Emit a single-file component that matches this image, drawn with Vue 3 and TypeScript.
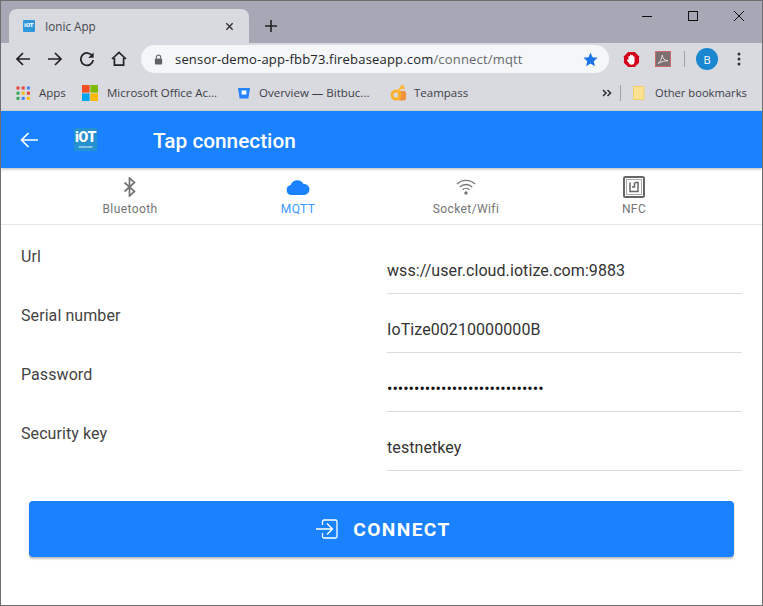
<script setup lang="ts">
const bookmarks = ['Apps', 'Microsoft Office Ac...', 'Overview — Bitbuc...', 'Teampass']
const fields = [
  { label: 'Url', value: 'wss://user.cloud.iotize.com:9883', dots: false },
  { label: 'Serial number', value: 'IoTize00210000000B', dots: false },
  { label: 'Password', value: '•••••••••••••••••••••••••••••', dots: true },
  { label: 'Security key', value: 'testnetkey', dots: false },
]
</script>

<template>
  <div class="window">
    <div class="titlebar">
      <div class="tab">
        <svg class="favicon" viewBox="0 0 12 12"><rect width="12" height="12" rx="1" fill="#2f97dc"/><text x="6" y="7.4" font-size="6" font-weight="900" text-anchor="middle" fill="#fff" font-family="Roboto">iOT</text></svg>
        <span class="tab-title">Ionic App</span>
        <svg class="tab-close" viewBox="0 0 10 10"><path d="M1.5 1.5l7 7M8.5 1.5l-7 7" stroke="#333" stroke-width="1.6"/></svg>
      </div>
      <svg class="plus" viewBox="0 0 12 12"><path d="M6 0v12M0 6h12" stroke="#222" stroke-width="1.6"/></svg>
      <div class="controls">
        <svg viewBox="0 0 12 12"><path d="M1 6.5h10" stroke="#111" stroke-width="1"/></svg>
        <svg viewBox="0 0 12 12"><rect x="1.5" y="1.5" width="9" height="9" fill="none" stroke="#111" stroke-width="1"/></svg>
        <svg viewBox="0 0 12 12"><path d="M1 1l10 10M11 1L1 11" stroke="#111" stroke-width="1"/></svg>
      </div>
    </div>

    <div class="toolbar">
      <svg class="nav" viewBox="0 0 16 16"><path d="M15 8H2M8 2L2 8l6 6" fill="none" stroke="#222" stroke-width="1.7"/></svg>
      <svg class="nav" viewBox="0 0 16 16"><path d="M1 8h13M8 2l6 6-6 6" fill="none" stroke="#222" stroke-width="1.7"/></svg>
      <svg class="nav" viewBox="0 0 16 16"><path d="M13.5 5.2A6.2 6.2 0 1 0 14.2 9" fill="none" stroke="#222" stroke-width="1.8"/><path d="M14.6 1.4v5.4H9.2z" fill="#222"/></svg>
      <svg class="nav" viewBox="0 0 16 16"><path d="M1 8l7-6.500L15 8M3.400 7v7.200h9.200V7" fill="none" stroke="#222" stroke-width="1.700"/></svg>
      <div class="omnibox">
        <svg class="lock" viewBox="0 0 10 12"><path d="M2.600 5V3.400a2.400 2.400 0 0 1 4.800 0V5" fill="none" stroke="#5f6368" stroke-width="1.200"/><rect x="1" y="5" width="8" height="6.600" rx=".8" fill="#5f6368"/></svg>
        <span class="url"><b>sensor-demo-app-fbb73.firebaseapp.com</b>/connect/mqtt</span>
        <svg class="star" viewBox="0 0 16 16"><path d="M8 .8l2.200 4.900 5.300.5-4 3.600 1.200 5.300L8 12.300l-4.700 2.800 1.200-5.300-4-3.600 5.300-.5z" fill="#1a73e8"/></svg>
      </div>
      <svg class="ext" viewBox="0 0 18 18"><path d="M5.500 1h7L17 5.500v7L12.500 17h-7L1 12.500v-7z" fill="#d5001c"/><path d="M5.800 9.500V6a.8.8 0 0 1 1.600 0V8.500V4.600a.8.8 0 0 1 1.600 0V8.500V5a.8.8 0 0 1 1.600 0V8.500V6.400a.8.8 0 0 1 1.600 0V11c0 2.200-1.300 3.500-3.200 3.500-1.500 0-2.300-.7-3-2L4.300 10.200c-.4-.9 1-1.500 1.500-.7z" fill="#fff"/></svg>
      <svg class="ext pdf" viewBox="0 0 16 16"><rect x=".5" y=".5" width="15" height="15" fill="#7c6f70" stroke="#c96a6a" stroke-width="1"/><path d="M3 12.500c2-1 4-5 4.300-8.500.3 3.500 2.200 5.500 5.700 5.800-3 0-6 .6-10 2.700z" fill="none" stroke="#e4dfdf" stroke-width="1"/></svg>
      <span class="tool-sep"></span>
      <span class="avatar">B</span>
      <svg class="menu" viewBox="0 0 4 14"><circle cx="2" cy="2" r="1.500"/><circle cx="2" cy="7" r="1.500"/><circle cx="2" cy="12" r="1.500"/></svg>
    </div>

    <div class="bookmarks">
      <div class="bm bm-apps">
        <svg viewBox="0 0 14 14">
          <g v-for="(row, r) in [['#ea4335','#ea4335','#4285f4'],['#34a853','#fbbc05','#ea4335'],['#34a853','#4285f4','#fbbc05']]" :key="r">
            <rect v-for="(c, i) in row" :key="i" :x="i * 5.2 + .5" :y="r * 5.2 + .5" width="3" height="3" :fill="c"/>
          </g>
        </svg>
        <span>{{ bookmarks[0] }}</span>
      </div>
      <div class="bm bm-office">
        <svg viewBox="0 0 16 16"><rect width="7.600" height="7.600" fill="#f25022"/><rect x="8.400" width="7.600" height="7.600" fill="#7fba00"/><rect y="8.400" width="7.600" height="7.600" fill="#00a4ef"/><rect x="8.400" y="8.400" width="7.600" height="7.600" fill="#ffb900"/></svg>
        <span>{{ bookmarks[1] }}</span>
      </div>
      <div class="bm bm-bit">
        <svg viewBox="0 0 14 14"><path d="M1 2h12l-1.600 10.500H2.600z" fill="#2684ff"/><rect x="4.600" y="4.500" width="4.800" height="4" fill="#fff"/></svg>
        <span>{{ bookmarks[2] }}</span>
      </div>
      <div class="bm bm-team">
        <svg viewBox="0 0 17 17"><rect x="8" y="7" width="8" height="9.500" rx="2" fill="#f0923a"/><circle cx="6" cy="11" r="4" fill="none" stroke="#fbb02d" stroke-width="3"/><path d="M7.500 7.500L13.500 1.500M11 1.500l3.500 3.500" fill="none" stroke="#fbb937" stroke-width="2.200"/></svg>
        <span>{{ bookmarks[3] }}</span>
      </div>
      <svg class="chev" viewBox="0 0 10 8"><path d="M1 1l3 3-3 3M5.500 1l3 3-3 3" fill="none" stroke="#333" stroke-width="1.600"/></svg>
      <span class="bm-sep"></span>
      <div class="bm bm-other">
        <svg viewBox="0 0 12 14"><path d="M.5.500h10.500v13H.5z" fill="#fde293" stroke="#f0cf6c"/></svg>
        <span>Other bookmarks</span>
      </div>
    </div>

    <div class="app">
      <header class="app-header">
        <svg class="back" viewBox="0 0 18 16"><path d="M18 8H1.500M8.500 1L1.500 8l7 7" fill="none" stroke="#fff" stroke-width="1.700"/></svg>
        <div class="logo"><span class="logo-main">iOT</span><span class="logo-sub">iotize.com</span></div>
        <h1>Tap connection</h1>
      </header>

      <nav class="segments">
        <div class="segment">
          <span class="seg-icon"><svg viewBox="0 0 14 20" width="14" height="20"><path d="M1.500 5.500l10 9-5 4.500V1l5 4.500-10 9" fill="none" stroke="#757575" stroke-width="1.700"/></svg></span>
          <span>Bluetooth</span>
        </div>
        <div class="segment active">
          <span class="seg-icon"><svg viewBox="0 0 24 16" width="24" height="16"><path d="M5.500 16A5 5 0 0 1 4.700 6.100 7 7 0 0 1 17.500 5 5.500 5.500 0 0 1 18.500 16z" fill="#1a82ff"/></svg></span>
          <span>MQTT</span>
        </div>
        <div class="segment">
          <span class="seg-icon"><svg viewBox="0 0 20 16" width="20" height="16"><path d="M1 5a13 13 0 0 1 18 0M3.800 8a9 9 0 0 1 12.400 0M6.500 10.800a5 5 0 0 1 7 0" fill="none" stroke="#757575" stroke-width="1.300"/><circle cx="10" cy="14" r="1.700" fill="#757575"/></svg></span>
          <span>Socket/Wifi</span>
        </div>
        <div class="segment">
          <span class="seg-icon"><svg viewBox="0 0 22 22" width="22" height="22"><rect x="1" y="1" width="20" height="20" rx="1.500" fill="none" stroke="#666" stroke-width="2"/><rect x="3.500" y="3.500" width="15" height="15" fill="none" stroke="#aaa" stroke-width="1"/><path d="M7 6.500v9h8v-9h-3" fill="none" stroke="#666" stroke-width="1.500"/><path d="M11.500 6.500V11H9" fill="none" stroke="#666" stroke-width="1.500"/></svg></span>
          <span>NFC</span>
        </div>
      </nav>

      <form class="form">
        <div v-for="f in fields" :key="f.label" class="field">
          <label>{{ f.label }}</label>
          <div class="value" :class="{ dots: f.dots }">{{ f.value }}</div>
        </div>
      </form>

      <div class="action">
        <button type="button" class="connect">
          <svg viewBox="0 0 22 20" width="22" height="20"><path d="M6.500 6V2.500A1.500 1.500 0 0 1 8 1h11.500A1.500 1.500 0 0 1 21 2.500v15a1.500 1.500 0 0 1-1.500 1.500H8a1.500 1.500 0 0 1-1.500-1.500V14M0 10h16M11 4.500l5.500 5.500-5.500 5.500" fill="none" stroke="#fff" stroke-width="1.300"/></svg>
          <span>CONNECT</span>
        </button>
      </div>
    </div>
  </div>
</template>

<style>
html, body { margin: 0; background: #fff; }
</style>

<style scoped>
.window {
  width: 763px;
  height: 606px;
  box-sizing: border-box;
  border: 1px solid #6e6e6e;
  overflow: hidden;
  display: flex;
  flex-direction: column;
  font-family: "Open Sans", sans-serif;
}
.titlebar {
  height: 42px;
  background: #a6a9b5;
  display: flex;
  align-items: flex-end;
  padding-left: 8px;
  flex: none;
}
.tab {
  width: 240px;
  height: 34px;
  box-sizing: border-box;
  background: #d9dae0;
  border-radius: 8px 8px 0 0;
  display: flex;
  align-items: center;
  padding: 0 15px 0 14px;
}
.favicon { width: 12px; height: 12px; margin-top: -1px; }
.tab-title { margin-left: 10px; font-size: 11.700px; color: #45474b; flex: 1; }
.tab-close { width: 9px; height: 9px; }
.plus { width: 12px; height: 12px; margin: 0 0 11px 16px; }
.controls {
  margin-left: auto;
  align-self: flex-start;
  display: flex;
  gap: 34px;
  padding: 9px 17px 0 0;
}
.controls svg { width: 12px; height: 12px; }
.toolbar {
  height: 32px;
  flex: none;
  background: #d9dae0;
  display: flex;
  align-items: center;
  padding-left: 14px;
}
.nav { width: 16px; height: 16px; margin-right: 16px; }
.nav:nth-child(4) { margin-right: 14px; }
.omnibox {
  width: 468px;
  height: 28px;
  background: #f5f6f8;
  border-radius: 14px;
  display: flex;
  align-items: center;
  padding: 0 11px 0 13px;
  box-sizing: border-box;
}
.lock { width: 9px; height: 11px; }
.url {
  margin-left: 12px;
  font-size: 13px;
  color: #666a70;
  flex: 1;
  white-space: nowrap;
  letter-spacing: .18px;
}
.url b { font-weight: 400; color: #22252a; }
.star { width: 15px; height: 15px; }
.ext { width: 17px; height: 17px; margin-left: 14px; }
.pdf { width: 16px; height: 16px; margin-left: 15px; }
.tool-sep { width: 1px; height: 16px; background: #a0a2a8; margin-left: 13px; }
.avatar {
  width: 22px;
  height: 22px;
  border-radius: 50%;
  background: #1b87d0;
  color: #fff;
  font-size: 11px;
  display: flex;
  align-items: center;
  justify-content: center;
  margin-left: 11px;
}
.menu { width: 4px; height: 14px; margin-left: 19px; fill: #333; }
.bookmarks {
  height: 36px;
  flex: none;
  background: #d9dae0;
  display: flex;
  align-items: center;
  font-size: 11.500px;
  color: #3c4046;
  padding-bottom: 1px;
  box-sizing: border-box;
}
.bm { display: flex; align-items: center; white-space: nowrap; }
.bm svg { flex: none; }
.bm-apps { margin-left: 15px; width: 66px; }
.bm-apps svg { width: 14px; height: 14px; margin-right: 9px; }
.bm-office { width: 155px; }
.bm-office svg { width: 16px; height: 16px; margin-right: 9px; }
.bm-bit { width: 153px; }
.bm-bit svg { width: 14px; height: 14px; margin-right: 8px; }
.bm-team { width: 212px; }
.bm-team svg { width: 17px; height: 17px; margin-right: 7px; }
.chev { width: 10px; height: 8px; margin-right: 8px; }
.bm-sep { width: 1px; height: 16px; background: #a0a2a8; margin-right: 12px; }
.bm-other { font-size: 11.200px; }
.bm-other svg { width: 12px; height: 14px; margin-right: 10px; }
.app {
  flex: 1;
  display: flex;
  flex-direction: column;
  font-family: Roboto, sans-serif;
  background: #fff;
}
.app-header {
  height: 57px;
  flex: none;
  background: #1a82ff;
  display: flex;
  align-items: center;
  padding-left: 19px;
  box-shadow: 0 1px 3px rgba(0, 0, 0, .3);
  position: relative;
}
.back { width: 18px; height: 16px; }
.logo {
  width: 23px;
  height: 23px;
  margin-left: 36px;
  background: #2591cf;
  border-radius: 2px;
  display: flex;
  flex-direction: column;
  align-items: center;
  justify-content: center;
  color: #fff;
}
.logo-main { font-size: 14px; font-weight: 900; line-height: 14px; letter-spacing: -.3px; }
.logo-sub { font-size: 3px; line-height: 4px; margin-top: 1px; }
h1 {
  margin: 2px 0 0 56px;
  color: #fff;
  font-size: 20.800px;
  font-weight: 500;
}
.segments {
  height: 57px;
  flex: none;
  box-sizing: border-box;
  border-bottom: 1px solid #e6e6e6;
  display: grid;
  grid-template-columns: repeat(4, 168px);
  padding-left: 45px;
}
.segment {
  display: flex;
  flex-direction: column;
  align-items: center;
  color: #757575;
  font-size: 12px;
  letter-spacing: .4px;
  padding-top: 8px;
  gap: 4px;
}
.seg-icon { height: 22px; display: flex; align-items: center; }
.segment.active { color: #3d97ff; }
.form { padding-top: 10px; flex: none; }
.field {
  height: 59px;
  box-sizing: border-box;
  display: flex;
  padding-left: 20px;
}
.field label {
  width: 366px;
  font-size: 16px;
  color: #444;
  line-height: 19px;
  padding-top: 12px;
  letter-spacing: .08px;
}
.value {
  width: 355px;
  height: 59px;
  box-sizing: border-box;
  border-bottom: 1px solid #dcdcdc;
  font-size: 16px;
  color: #333;
  line-height: 19px;
  padding-top: 26px;
  letter-spacing: .08px;
}
.value.dots { color: #111; letter-spacing: 0; }
.action { padding: 30px 28px 0; }
.connect {
  width: 705px;
  height: 56px;
  border: 0;
  border-radius: 4px;
  background: #1a82ff;
  box-shadow: 0 2px 2px rgba(0, 0, 0, .25);
  color: #fff;
  font-family: Roboto, sans-serif;
  font-size: 19.200px;
  font-weight: 700;
  letter-spacing: 1.400px;
  display: flex;
  align-items: center;
  justify-content: center;
  gap: 15px;
  padding: 0 0 0 4px;
}
</style>
